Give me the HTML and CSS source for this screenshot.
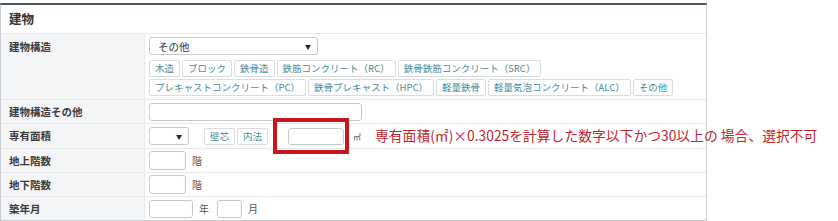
FILE: index.html
```html
<!DOCTYPE html>
<html>
<head>
    <title>建物</title>
    <meta charset="utf-8">
    <link rel="stylesheet" href="styles.css">
</head>
<body>
    <div class="page">
        <div class="panel">
            <div class="panel-head">建物</div>

            <div class="row row--tall">
                <div class="label">建物構造</div>
                <div class="value value--stack">
                    <div class="select select--wide"><span>その他</span><span class="arrow">▼</span></div>
                    <div class="chips">
                        <span class="chip">木造</span>
                        <span class="chip">ブロック</span>
                        <span class="chip">鉄骨造</span>
                        <span class="chip">鉄筋コンクリート（RC）</span>
                        <span class="chip">鉄骨鉄筋コンクリート（SRC）</span>
                    </div>
                    <div class="chips">
                        <span class="chip">プレキャストコンクリート（PC）</span>
                        <span class="chip">鉄骨プレキャスト（HPC）</span>
                        <span class="chip">軽量鉄骨</span>
                        <span class="chip">軽量気泡コンクリート（ALC）</span>
                        <span class="chip">その他</span>
                    </div>
                </div>
            </div>

            <div class="row">
                <div class="label">建物構造その他</div>
                <div class="value">
                    <div class="input input--long"></div>
                </div>
            </div>

            <div class="row row--area">
                <div class="label">専有面積</div>
                <div class="value">
                    <div class="select select--small"><span></span><span class="arrow">▼</span></div>
                    <span class="chip chip--first">壁芯</span>
                    <span class="chip">内法</span>
                    <div class="input input--area"></div>
                    <span class="unit unit--m2">㎡</span>
                </div>
            </div>

            <div class="row">
                <div class="label">地上階数</div>
                <div class="value">
                    <div class="input input--floor"></div>
                    <span class="unit">階</span>
                </div>
            </div>

            <div class="row">
                <div class="label">地下階数</div>
                <div class="value">
                    <div class="input input--floor"></div>
                    <span class="unit">階</span>
                </div>
            </div>

            <div class="row row--last">
                <div class="label">築年月</div>
                <div class="value">
                    <div class="input input--year"></div>
                    <span class="unit">年</span>
                    <div class="input input--month"></div>
                    <span class="unit">月</span>
                </div>
            </div>
        </div>

        <!-- 注記（赤枠と説明文） -->
        <div class="note-box"></div>
        <div class="note-text">専有面積(㎡)×0.3025を計算した数字以下かつ30以上の 場合、選択不可</div>
    </div>
</body>
</html>
```

FILE: styles.css
```css
body {
    margin: 0;
    background: #fff;
    font-family: "Noto Sans CJK JP", "Noto Sans", sans-serif;
    color: #333;
}

.page {
    position: relative;
    width: 838px;
    height: 221px;
    padding-top: 3px;
    box-sizing: border-box;
}

.panel {
    width: 707px;
    box-sizing: border-box;
    border: 1px solid #c9cdd1;
    border-top: 2px solid #4d5866;
}

.panel-head {
    height: 28px;
    line-height: 28px;
    padding-left: 8px;
    font-size: 12.5px;
    font-weight: bold;
    color: #333;
}

.row {
    display: flex;
    border-top: 1px solid #e7e9eb;
}

.label {
    width: 144px;
    flex-shrink: 0;
    background: #f4f5f7;
    border-right: 1px solid #e7e9eb;
    padding: 4px 8px;
    box-sizing: border-box;
    font-size: 10.5px;
    font-weight: bold;
    color: #3b3b3b;
    line-height: 15px;
}

.value {
    flex: 1;
    display: flex;
    align-items: center;
    padding: 2px 4px;
    font-size: 10.5px;
}

.value--stack {
    flex-direction: column;
    align-items: flex-start;
    padding: 3px 4px 3px 4px;
}

.row--tall .label {
    padding-top: 5px;
}

.row--area .value {
    padding: 3px 4px;
}

.select {
    display: flex;
    align-items: center;
    justify-content: space-between;
    height: 18px;
    box-sizing: border-box;
    border: 1px solid #c6c9cc;
    border-radius: 3px;
    padding: 0 6px 0 8px;
    font-size: 10.5px;
    color: #333;
    background: #fff;
}

.select--wide {
    width: 169px;
}

.select--small {
    width: 40px;
}

.arrow {
    font-size: 6px;
    color: #222;
}

.chips {
    display: flex;
    gap: 2px;
    margin-top: 5px;
}

.chips + .chips {
    margin-top: 2px;
}

.chip {
    height: 17px;
    line-height: 15px;
    box-sizing: border-box;
    border: 1px solid #d9dde0;
    border-radius: 2px;
    padding: 0 5px;
    font-size: 9.5px;
    color: #4a8c9c;
    background: #fff;
    white-space: nowrap;
}

.chip--first {
    margin-left: 15px;
}

.row--area .chip + .chip {
    margin-left: 2px;
}

.input {
    height: 18px;
    box-sizing: border-box;
    border: 1px solid #c6c9cc;
    border-radius: 3px;
    background: #fff;
}

.input--long {
    width: 213px;
}

.input--area {
    width: 56px;
    margin-left: 20px;
    height: 17px;
}

.input--floor {
    width: 37px;
    height: 19px;
}

.input--year {
    width: 44px;
}

.input--month {
    width: 25px;
}

.unit {
    margin: 0 8px 0 6px;
    font-size: 10px;
    color: #555;
}

.unit--m2 {
    margin-left: 9px;
    font-size: 8px;
}

.note-box {
    position: absolute;
    left: 273px;
    top: 118px;
    width: 76px;
    height: 36px;
    box-sizing: border-box;
    border: 4px solid #c8161e;
}

.note-text {
    position: absolute;
    left: 375px;
    top: 126px;
    font-size: 13.8px;
    line-height: 18px;
    color: #c0272d;
    white-space: nowrap;
}
```
